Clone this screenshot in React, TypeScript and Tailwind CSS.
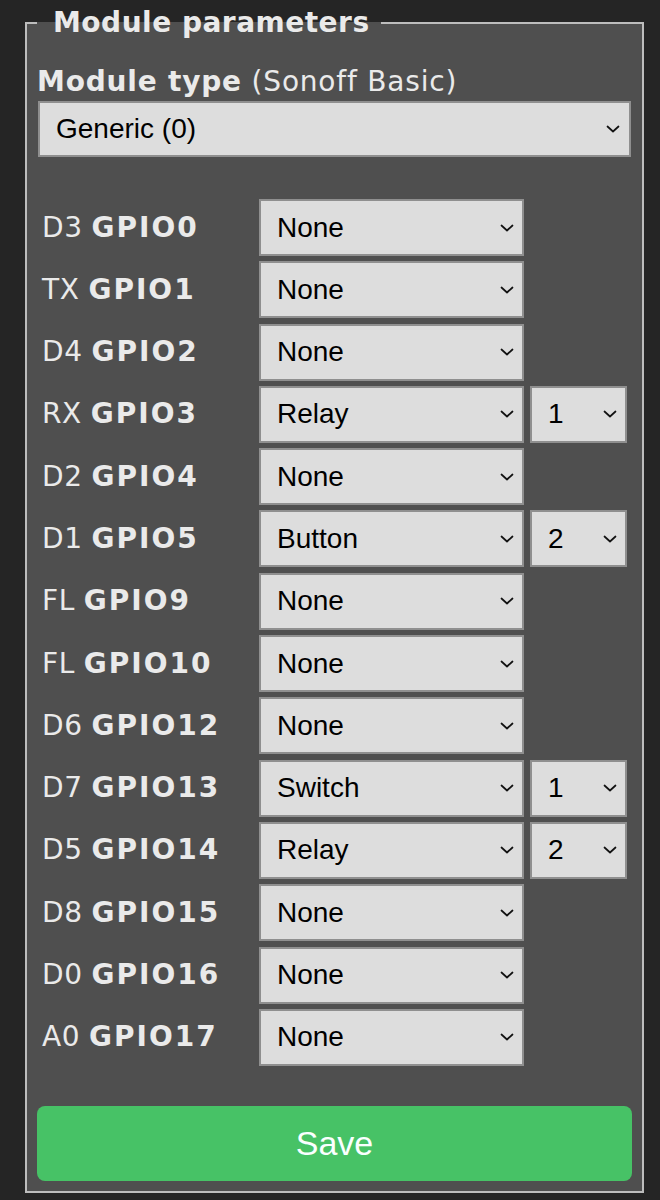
import React from 'react';

type Pin = {
  pin: string;
  gpio: string;
  fn: string;
  idx?: string;
};

const pins: Pin[] = [
  { pin: 'D3', gpio: 'GPIO0', fn: 'None' },
  { pin: 'TX', gpio: 'GPIO1', fn: 'None' },
  { pin: 'D4', gpio: 'GPIO2', fn: 'None' },
  { pin: 'RX', gpio: 'GPIO3', fn: 'Relay', idx: '1' },
  { pin: 'D2', gpio: 'GPIO4', fn: 'None' },
  { pin: 'D1', gpio: 'GPIO5', fn: 'Button', idx: '2' },
  { pin: 'FL', gpio: 'GPIO9', fn: 'None' },
  { pin: 'FL', gpio: 'GPIO10', fn: 'None' },
  { pin: 'D6', gpio: 'GPIO12', fn: 'None' },
  { pin: 'D7', gpio: 'GPIO13', fn: 'Switch', idx: '1' },
  { pin: 'D5', gpio: 'GPIO14', fn: 'Relay', idx: '2' },
  { pin: 'D8', gpio: 'GPIO15', fn: 'None' },
  { pin: 'D0', gpio: 'GPIO16', fn: 'None' },
  { pin: 'A0', gpio: 'GPIO17', fn: 'None' },
];

const Chevron = () => (
  <svg width="14" height="8" viewBox="0 0 14 8" fill="none" stroke="#111" strokeWidth="1.7" strokeLinecap="round" strokeLinejoin="round">
    <path d="M1.5 1.5 7 6.5l5.5-5" />
  </svg>
);

// fake native select: grey box, value on the left, chevron on the right
const SelectBox = ({ value, className = '' }: { value: string; className?: string }) => (
  <div
    className={`flex items-center justify-between border-2 border-[#8f8f8f] bg-[#dddddd] pl-[16px] pr-[8px] font-['Liberation_Sans',Arial,sans-serif] text-[28px] text-black ${className}`}
  >
    <span>{value}</span>
    <Chevron />
  </div>
);

const App: React.FC = () => {
  return (
    <div className="min-h-screen bg-[#252525] pt-[6px] font-['DejaVu_Sans',Verdana,sans-serif] text-[#eaeaea]">
      <fieldset className="ml-[25px] w-[619px] border-2 border-[#bdbdbd] bg-[#4f4f4f] px-[10px] pb-[10px]">
        <legend className="pl-[16px] pr-[11px] text-[28px] font-bold leading-[34px] tracking-[0.5px]">Module parameters</legend>

        {/* Module type */}
        <p className="mt-[25px] text-[28px] leading-[34px] tracking-[0.8px]">
          <b>Module type</b> (Sonoff Basic)
        </p>
        <SelectBox value="Generic (0)" className="mx-[1px] mt-[2px] h-[56px] pr-[9px]" />

        {/* GPIO rows */}
        <div className="mt-[42px] flex flex-col gap-y-[5.3px]">
          {pins.map((p) => (
            <div key={p.gpio} className="flex h-[57px] items-center">
              <div className="w-[222px] pl-[5px] text-[28px] leading-[34px]">
                <span className="tracking-[0.6px]">{p.pin}</span> <b className="tracking-[2px]">{p.gpio}</b>
              </div>
              <SelectBox value={p.fn} className="h-full w-[265px]" />
              {p.idx && <SelectBox value={p.idx} className="ml-[6px] h-full w-[97px]" />}
            </div>
          ))}
        </div>

        <button className="mt-[40px] flex h-[75px] w-full items-center justify-center rounded-[8px] bg-[#47c266] font-['Liberation_Sans',Arial,sans-serif] text-[34px] text-[#faffff]">
          Save
        </button>
      </fieldset>
    </div>
  );
};

export default App;
